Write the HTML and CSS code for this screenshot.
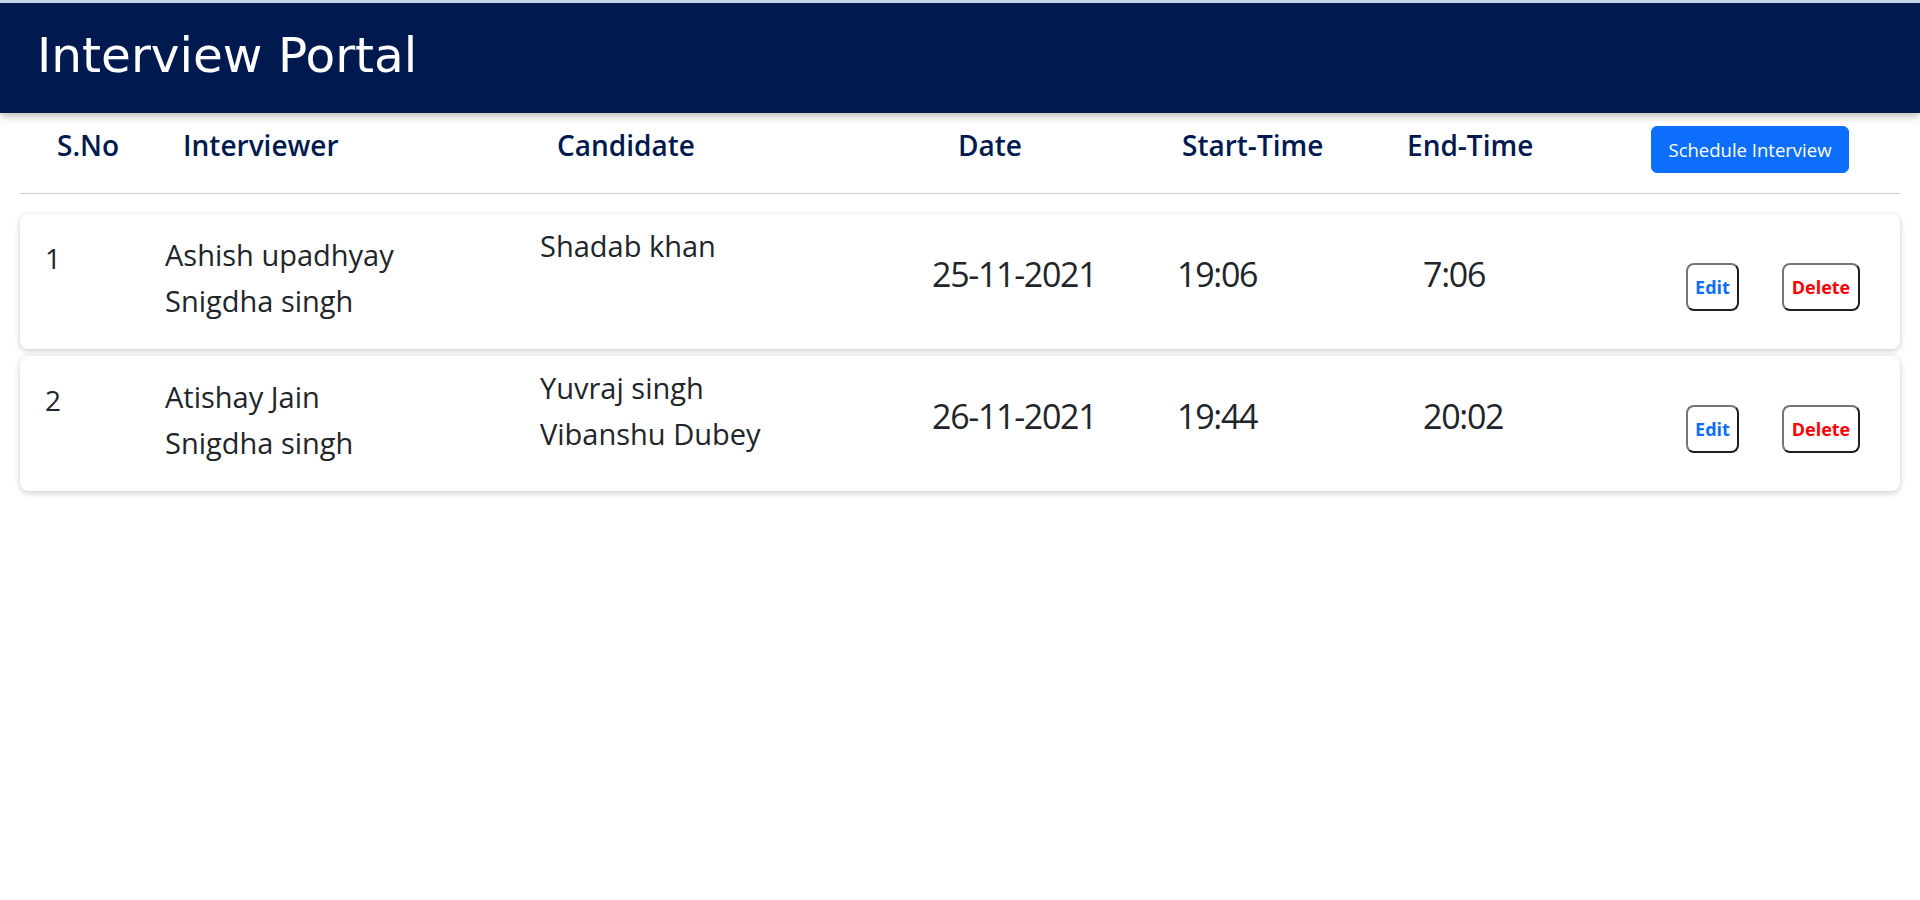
FILE: index.html
```html
<!DOCTYPE html>
<html lang="en">
<head>
<meta charset="utf-8">
<title>Interview Portal</title>
<link rel="stylesheet" href="styles.css">
</head>
<body>
  <nav class="navbar">
    <h1 class="brand">Interview Portal</h1>
  </nav>
  <main class="content">
    <div class="head-row">
      <div class="h-cell h-sno">S.No</div>
      <div class="h-cell h-int">Interviewer</div>
      <div class="h-cell h-cand">Candidate</div>
      <div class="h-cell h-date">Date</div>
      <div class="h-cell h-start">Start-Time</div>
      <div class="h-cell h-end">End-Time</div>
      <div class="h-action"><button class="btn-schedule">Schedule Interview</button></div>
    </div>

    <div class="card">
      <div class="c-sno">1</div>
      <div class="c-int">
        <div class="name">Ashish upadhyay</div>
        <div class="name">Snigdha singh</div>
      </div>
      <div class="c-cand">
        <div class="name">Shadab khan</div>
      </div>
      <div class="c-big c-date">25-11-2021</div>
      <div class="c-big c-start">19:06</div>
      <div class="c-big c-end">7:06</div>
      <div class="c-actions">
        <button class="btn-act btn-edit">Edit</button>
        <button class="btn-act btn-delete">Delete</button>
      </div>
    </div>

    <div class="card">
      <div class="c-sno">2</div>
      <div class="c-int">
        <div class="name">Atishay Jain</div>
        <div class="name">Snigdha singh</div>
      </div>
      <div class="c-cand">
        <div class="name">Yuvraj singh</div>
        <div class="name">Vibanshu Dubey</div>
      </div>
      <div class="c-big c-date">26-11-2021</div>
      <div class="c-big c-start">19:44</div>
      <div class="c-big c-end">20:02</div>
      <div class="c-actions">
        <button class="btn-act btn-edit">Edit</button>
        <button class="btn-act btn-delete">Delete</button>
      </div>
    </div>
  </main>
</body>
</html>
```
FILE: styles.css
```css
* { box-sizing: border-box; }

html, body {
  margin: 0;
  padding: 0;
  background: #ffffff;
}

body {
  font-family: "Open Sans", "Noto Sans", sans-serif;
  color: #212529;
}

.navbar {
  height: 113px;
  border-top: 3px solid #c6d4ea;
  background: #001a4f;
  padding: 24px 37px 0;
  box-shadow: 0 3px 8px rgba(0, 0, 0, 0.28);
  position: relative;
  z-index: 1;
}

.brand {
  margin: 0;
  font-family: "Comic Sans MS", "DejaVu Sans", sans-serif;
  font-weight: 400;
  font-size: 48.5px;
  line-height: 56px;
  color: #ffffff;
}

.content {
  padding: 0 20px 20px;
}

.head-row {
  display: flex;
  align-items: flex-start;
  height: 81px;
  padding: 11px 0 0 37px;
  border-bottom: 1px solid #cccccc;
  color: #001a4f;
}

.h-cell {
  font-size: 28px;
  font-weight: 600;
  line-height: 42px;
}

.h-sno { width: 126px; }
.h-int { width: 374px; }
.h-cand { width: 401px; }
.h-date { width: 224px; }
.h-start { width: 225px; }
.h-end { width: 244px; }

.h-action {
  padding-top: 2px;
}

.btn-schedule {
  font-family: "Open Sans", "Noto Sans", sans-serif;
  font-size: 18.5px;
  line-height: 28px;
  color: #ffffff;
  background: #0d6efd;
  border: 1px solid #0d6efd;
  border-radius: 6px;
  padding: 8px 15px;
  width: 198px;
  height: 47px;
  white-space: nowrap;
}

.card {
  display: flex;
  align-items: flex-start;
  margin-top: 20px;
  padding: 9px 40px 25px 25px;
  background: #ffffff;
  border-radius: 8px;
  box-shadow: 0 2px 6px rgba(0, 0, 0, 0.2), 0 0 2px rgba(0, 0, 0, 0.06);
}

.card + .card {
  margin-top: 7px;
}

.c-sno {
  width: 120px;
  padding-top: 12px;
  font-size: 28px;
  line-height: 46px;
  font-weight: 500;
}

.c-int {
  width: 375px;
  padding-top: 9px;
}

.c-cand {
  width: 392px;
}

.name {
  font-size: 29px;
  line-height: 46px;
  font-weight: 500;
  white-space: nowrap;
}

.c-big {
  padding-top: 28px;
  font-size: 34px;
  line-height: 46px;
  font-weight: 500;
  letter-spacing: -1.3px;
}

.c-date { width: 245px; }
.c-start { width: 246px; }
.c-end { width: 263px; }

.c-actions {
  display: flex;
  gap: 43px;
  padding-top: 40px;
}

.btn-act {
  height: 48px;
  padding: 0;
  background: #ffffff;
  border: 2px solid;
  border-color: #767676 #1f1f1f #1f1f1f #767676;
  border-radius: 8px;
  font-family: "Open Sans", "Noto Sans", sans-serif;
  font-size: 18px;
  font-weight: 700;
  flex-shrink: 0;
}

.btn-edit {
  width: 53px;
  color: #0d6efd;
}

.btn-delete {
  width: 78px;
  color: #ff0000;
}
```
